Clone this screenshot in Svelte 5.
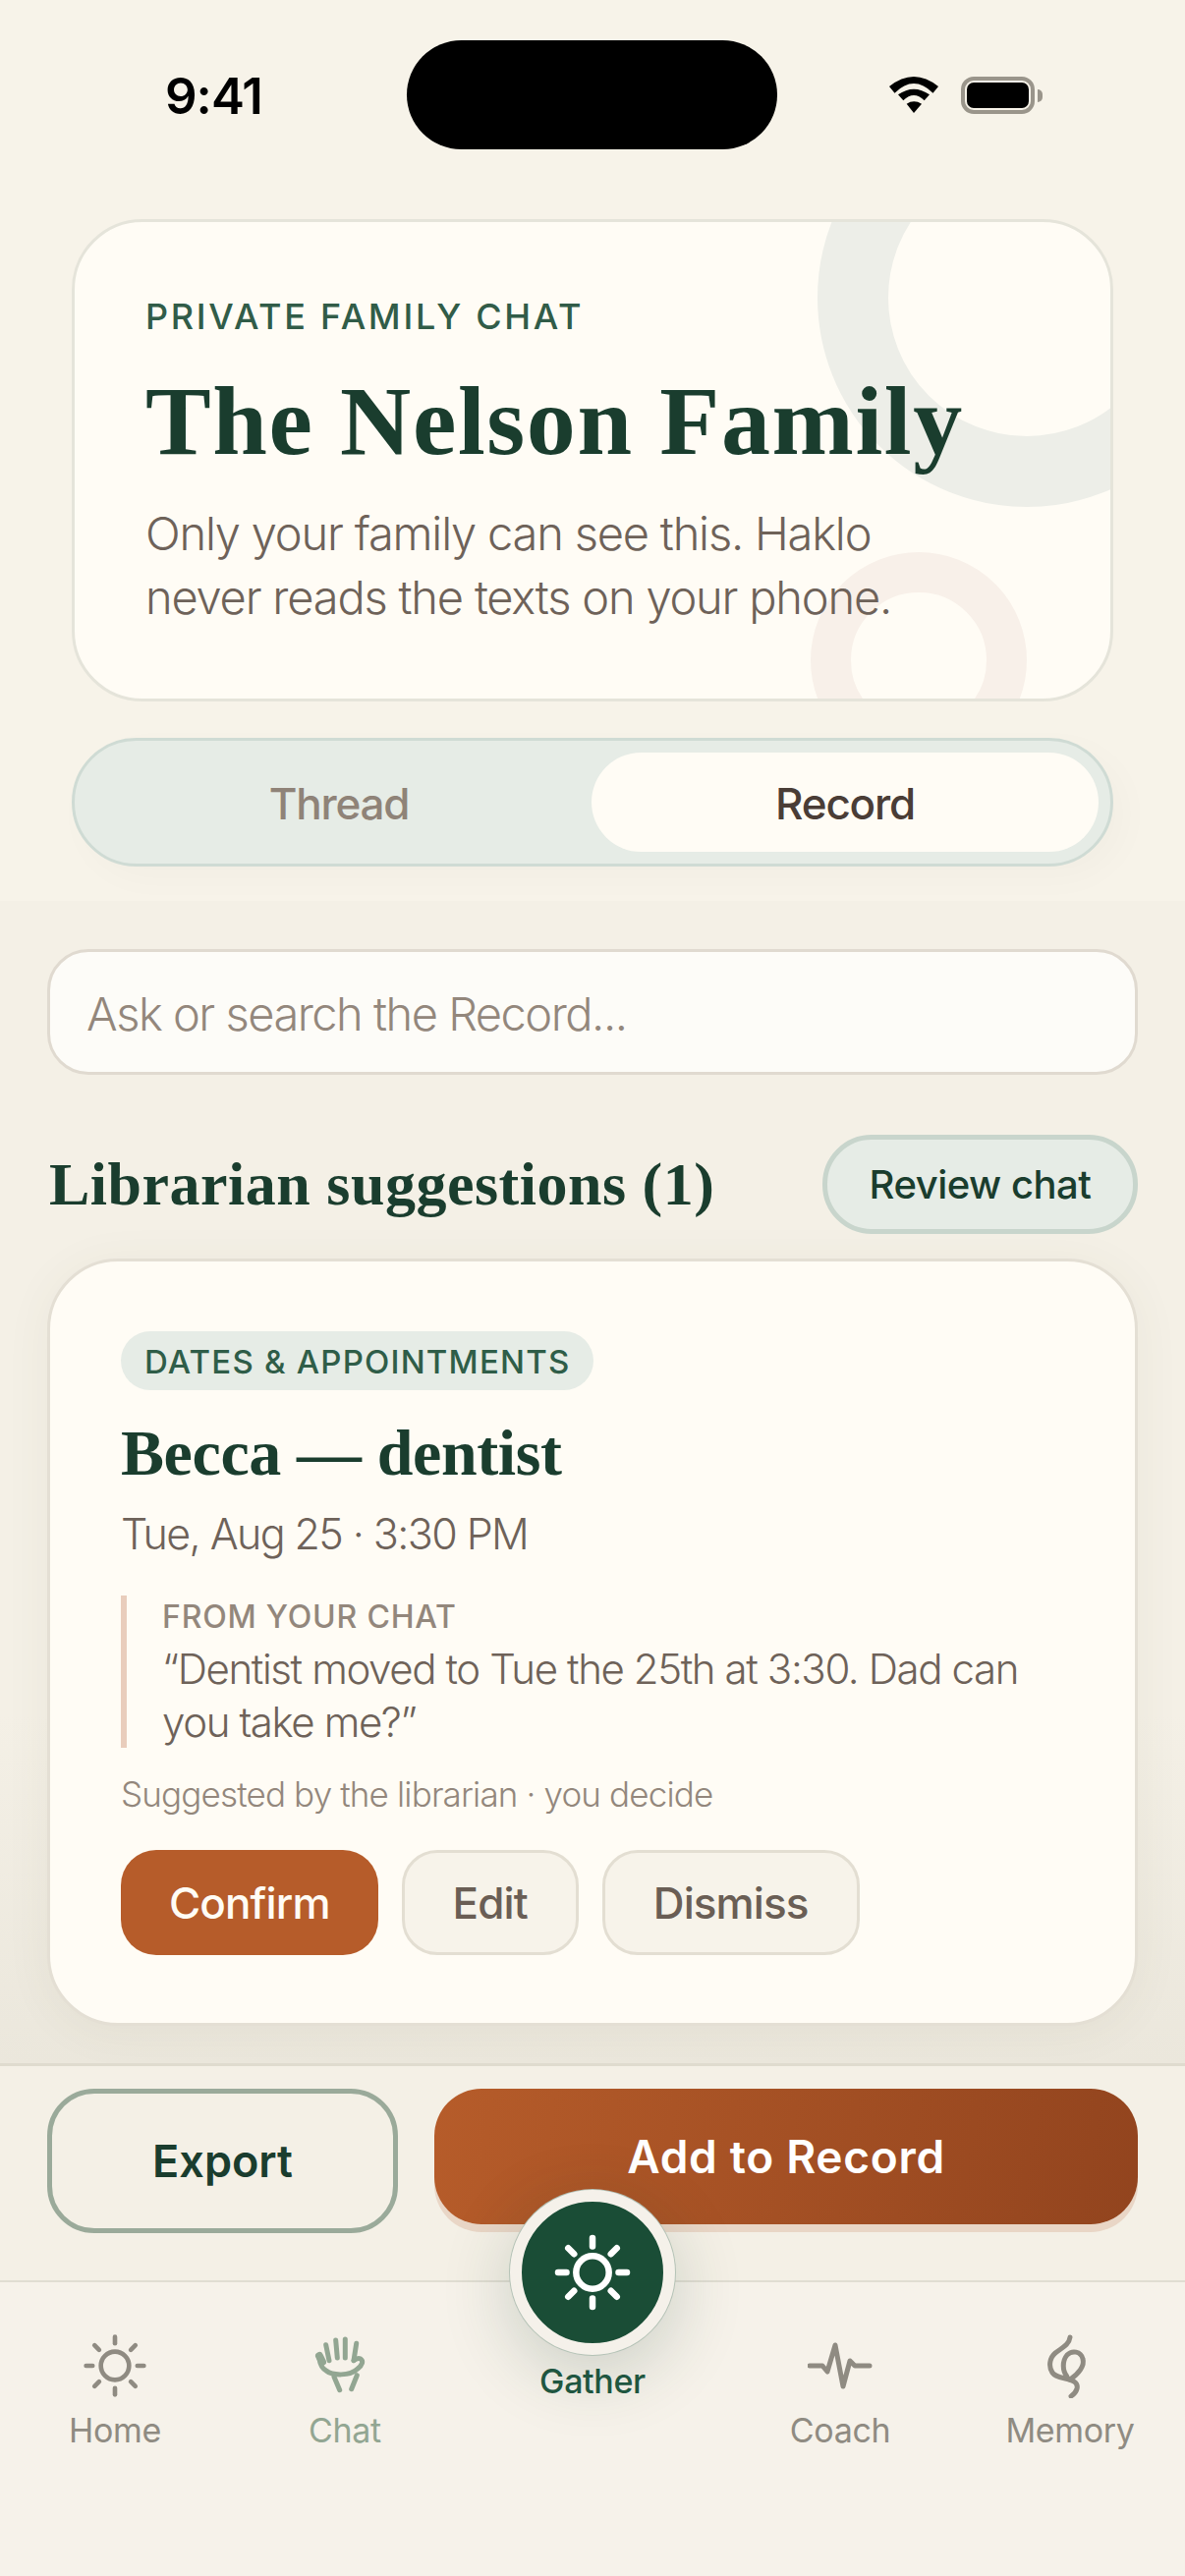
<script lang="ts">
	const tabs = [
		{ label: 'Thread', active: false },
		{ label: 'Record', active: true }
	];
	const rays = [0, 45, 90, 135, 180, 225, 270, 315];
</script>

{#snippet sun(inner: number, from: number, to: number, width: number)}
	<circle cx="50" cy="50" r={inner} fill="none" stroke="currentColor" stroke-width={width} />
	{#each rays as angle}
		<line
			x1="50"
			y1={50 - from}
			x2="50"
			y2={50 - to}
			stroke="currentColor"
			stroke-width={width}
			stroke-linecap="round"
			transform="rotate({angle} 50 50)"
		/>
	{/each}
{/snippet}

<div class="phone">
	<header class="top">
		<div class="status">
			<span class="time">9:41</span>
			<div class="island"></div>
			<div class="status-icons">
				<svg class="wifi" viewBox="0 0 50 38" width="50" height="38">
					<path d="M0 10 Q25 -10 50 10 L44.5 16.7 Q25 -2.7 5.5 16.7 Z" fill="#000" />
					<path d="M9 18.3 Q25 7 41 18.3 L35.7 24.3 Q25 13.7 14.3 24.3 Z" fill="#000" />
					<path d="M17.7 27.7 Q25 23 33 27.7 L25 37 Z" fill="#000" />
				</svg>
				<div class="battery"><div class="battery-fill"></div></div>
				<div class="battery-nub"></div>
			</div>
		</div>

		<section class="hero">
			<div class="ring ring-green"></div>
			<div class="ring ring-clay"></div>
			<div class="eyebrow">PRIVATE FAMILY CHAT</div>
			<h1>The Nelson Family</h1>
			<p>Only your family can see this. Haklo<br />never reads the texts on your phone.</p>
		</section>

		<div class="tabs">
			{#each tabs as tab}
				<div class="tab" class:active={tab.active}>{tab.label}</div>
			{/each}
		</div>
	</header>

	<main class="record">
		<div class="search">Ask or search the Record...</div>

		<div class="section-head">
			<h2>Librarian suggestions (1)</h2>
			<div class="review">Review chat</div>
		</div>

		<article class="card">
			<span class="tag">DATES &amp; APPOINTMENTS</span>
			<h3>Becca — dentist</h3>
			<div class="when">Tue, Aug 25 · 3:30 PM</div>
			<blockquote>
				<div class="from">FROM YOUR CHAT</div>
				<div class="quote">“Dentist moved to Tue the 25th at 3:30. Dad can you take me?”</div>
			</blockquote>
			<div class="note">Suggested by the librarian · you decide</div>
			<div class="actions">
				<div class="btn primary">Confirm</div>
				<div class="btn">Edit</div>
				<div class="btn">Dismiss</div>
			</div>
		</article>
	</main>

	<div class="action-bar">
		<div class="export">Export</div>
		<div class="add">Add to Record</div>
	</div>

	<nav class="nav">
		<div class="nav-item">
			<svg viewBox="0 0 100 100" width="66" height="66">{@render sun(21.7, 34.5, 44.5, 7)}</svg>
			<span>Home</span>
		</div>
		<div class="nav-item chat">
			<svg viewBox="0 0 66 66" width="66" height="66" fill="none" stroke="currentColor" stroke-width="5" stroke-linecap="round" stroke-linejoin="round">
				<path d="M13.7 11.7 L17 27.7" />
				<path d="M23.7 7 L25.3 25" />
				<path d="M33.3 6 L33.3 25" />
				<path d="M44.7 10.3 L42 27.7" />
				<path d="M7 26 C8 33 10 36 14 38 C20 43 38 44 46 36 C51 32 52 28 49 26 C47 25 44 26 42 27.7" />
				<path d="M7 23 L10 29" stroke-width="8" />
				<path d="M22 44.3 L27.7 57.7" />
				<path d="M45.3 42.7 L39.7 56.7" />
			</svg>
			<span>Chat</span>
		</div>
		<div class="nav-item gather">
			<div class="gather-btn">
				<svg viewBox="0 0 100 100" width="100" height="100">{@render sun(16.7, 26.5, 35, 6.5)}</svg>
			</div>
			<span>Gather</span>
		</div>
		<div class="nav-item">
			<svg viewBox="0 0 66 66" width="66" height="66" fill="none" stroke="currentColor" stroke-width="5" stroke-linecap="round" stroke-linejoin="round">
				<path d="M2 33 L15 33 L20 39 L28 12 L36 54 L43 28 L48 33 L63 33" />
			</svg>
			<span>Coach</span>
		</div>
		<div class="nav-item">
			<svg viewBox="0 0 66 66" width="66" height="66" fill="none" stroke="currentColor" stroke-width="5" stroke-linecap="round" stroke-linejoin="round">
				<path d="M33 4 C32 12 24 15 18 20 C12 25 11 34 15 40 C19 46 30 45 37 49 C43 53 40 60 34 64" />
				<path d="M30 44 C25 38 25 28 30 22 C35 17 44 18 46 26 C48 33 42 41 33 47" />
			</svg>
			<span>Memory</span>
		</div>
	</nav>
</div>

<style>
	:global(body) {
		margin: 0;
		background: #f7f3e9;
	}

	.phone {
		width: 1206px;
		height: 2622px;
		display: flex;
		flex-direction: column;
		overflow: hidden;
		font-family: Inter, 'Liberation Sans', sans-serif;
		color: #6e6259;
	}

	/* header */
	.top {
		height: 917px;
		box-sizing: border-box;
		flex-shrink: 0;
		background: #f7f3e9;
	}

	.status {
		height: 223px;
		box-sizing: border-box;
		padding-top: 41px;
		display: flex;
		align-items: flex-start;
		position: relative;
	}

	.time {
		margin: 32px 0 0 168px;
		font-size: 51px;
		line-height: 50px;
		font-weight: 600;
		letter-spacing: -1px;
		color: #000;
	}

	.island {
		position: absolute;
		left: 414px;
		top: 41px;
		width: 377px;
		height: 111px;
		border-radius: 56px;
		background: #000;
	}

	.status-icons {
		position: absolute;
		left: 905px;
		top: 78px;
		display: flex;
		align-items: center;
	}

	.wifi {
		display: block;
	}

	.battery {
		margin-left: 23px;
		width: 75px;
		height: 38px;
		box-sizing: border-box;
		border: 4px solid #9a958b;
		border-radius: 13px;
		padding: 2px;
	}

	.battery-fill {
		width: 100%;
		height: 100%;
		background: #000;
		border-radius: 7px;
	}

	.battery-nub {
		margin-left: 3px;
		width: 5px;
		height: 13px;
		border-radius: 0 6px 6px 0;
		background: #9a958b;
	}

	.hero {
		margin: 0 73px;
		height: 491px;
		box-sizing: border-box;
		position: relative;
		overflow: hidden;
		padding: 72px;
		background: #fffcf5;
		border: 3px solid #e5e4da;
		border-radius: 72px;
	}

	.ring {
		position: absolute;
		box-sizing: border-box;
		border-radius: 50%;
		border-style: solid;
	}

	.ring-green {
		left: 756px;
		top: -136px;
		width: 426px;
		height: 426px;
		border-width: 72px;
		border-color: #edeee8;
	}

	.ring-clay {
		left: 749px;
		top: 336px;
		width: 220px;
		height: 220px;
		border-width: 41px;
		border-color: #f8f0e9;
	}

	.eyebrow,
	h1,
	.hero p {
		position: relative;
		margin: 0;
	}

	.eyebrow {
		font-size: 36px;
		line-height: 48px;
		font-weight: 500;
		letter-spacing: 2.7px;
		color: #315c48;
	}

	h1 {
		margin-top: 29px;
		font-family: 'Liberation Serif', serif;
		font-size: 100px;
		line-height: 108px;
		font-weight: 700;
		letter-spacing: 1.6px;
		color: #1a3d2e;
	}

	.hero p {
		margin-top: 27px;
		font-size: 47px;
		line-height: 65px;
		font-weight: 300;
		letter-spacing: -1.2px;
	}

	.tabs {
		margin: 37px 73px 0;
		height: 131px;
		box-sizing: border-box;
		padding: 12px;
		display: grid;
		grid-template-columns: 1fr 516px;
		background: #e6ece6;
		border: 3px solid #cfdbd4;
		border-radius: 66px;
		box-shadow: 12px 12px 36px rgba(26, 61, 46, 0.025);
	}

	.tab {
		display: flex;
		align-items: center;
		justify-content: center;
		padding-top: 2px;
		border-radius: 51px;
		font-size: 44px;
		font-weight: 500;
		letter-spacing: -1.2px;
		color: #8f8378;
	}

	.tab.active {
		background: #fffcf5;
		color: #4a3d36;
	}

	/* record */
	.record {
		height: 1183px;
		flex-shrink: 0;
		box-sizing: border-box;
		padding: 49px 48px 0;
		background: linear-gradient(#f4f0e6 70%, #ebe7dc);
	}

	.search {
		height: 128px;
		box-sizing: border-box;
		padding: 2px 0 0 37px;
		display: flex;
		align-items: center;
		background: #fdfcf8;
		border: 3px solid #e0dad0;
		border-radius: 42px;
		font-size: 47px;
		font-weight: 300;
		letter-spacing: -1.5px;
		color: #93877c;
	}

	.section-head {
		margin-top: 61px;
		height: 101px;
		display: flex;
		align-items: center;
		justify-content: space-between;
	}

	h2 {
		margin: 0 0 0 2px;
		font-family: 'Liberation Serif', serif;
		font-size: 62px;
		font-weight: 700;
		letter-spacing: 0.5px;
		color: #1a3d2e;
	}

	.review {
		width: 321px;
		height: 101px;
		box-sizing: border-box;
		display: flex;
		align-items: center;
		justify-content: center;
		background: #e6ece6;
		border: 5px solid #c8d5cc;
		border-radius: 50px;
		font-size: 40px;
		font-weight: 500;
		letter-spacing: -0.5px;
		color: #1a3d2e;
	}

	.card {
		margin-top: 25px;
		height: 781px;
		box-sizing: border-box;
		padding: 71px 72px;
		background: #fffcf5;
		border: 3px solid #e4dfd4;
		border-radius: 72px;
		box-shadow: 0 6px 48px rgba(90, 80, 50, 0.06);
	}

	.tag {
		display: inline-block;
		height: 60px;
		box-sizing: border-box;
		padding: 1px 24px 0;
		line-height: 60px;
		border-radius: 30px;
		background: #e6ece6;
		font-size: 33px;
		font-weight: 500;
		letter-spacing: 1.2px;
		color: #2f5d48;
	}

	h3 {
		margin: 24px 0 0;
		font-family: 'Liberation Serif', serif;
		font-size: 66px;
		line-height: 80px;
		font-weight: 700;
		letter-spacing: -0.4px;
		color: #1a3d2e;
	}

	.when {
		margin-top: 12px;
		font-size: 43px;
		line-height: 60px;
		font-weight: 300;
		letter-spacing: -1.6px;
	}

	blockquote {
		margin: 33px 0 0;
		padding: 0 0 0 36px;
		height: 155px;
		border-left: 6px solid #e9cdbc;
	}

	.from {
		padding-top: 1px;
		font-size: 32px;
		line-height: 42px;
		font-weight: 500;
		letter-spacing: 0.8px;
		color: #93877c;
	}

	.quote {
		margin-top: 5px;
		font-size: 42px;
		line-height: 54px;
		font-weight: 300;
		letter-spacing: -1.4px;
	}

	.note {
		margin-top: 23px;
		font-size: 35px;
		line-height: 48px;
		font-weight: 300;
		letter-spacing: -0.85px;
		color: #93877c;
	}

	.actions {
		margin-top: 33px;
		display: flex;
		gap: 24px;
	}

	.btn {
		height: 107px;
		box-sizing: border-box;
		padding: 0 49px;
		display: flex;
		align-items: center;
		background: #f7f3ea;
		border: 3px solid #e3ded2;
		border-radius: 36px;
		font-size: 44px;
		font-weight: 500;
		letter-spacing: -0.9px;
		color: #6a5e55;
	}

	.btn.primary {
		background: #b65c2a;
		border: 0;
		color: #fffcf5;
	}

	/* bottom */
	.action-bar {
		height: 221px;
		flex-shrink: 0;
		box-sizing: border-box;
		padding: 23px 48px 0;
		display: flex;
		gap: 37px;
		align-items: flex-start;
		background: #f4f0e6;
		border-top: 3px solid #dfdbce;
	}

	.export {
		width: 357px;
		height: 147px;
		box-sizing: border-box;
		display: flex;
		align-items: center;
		justify-content: center;
		border: 5px solid #9aaa9a;
		border-radius: 48px;
		font-size: 45px;
		font-weight: 600;
		color: #1a3d2e;
	}

	.add {
		flex: 1;
		height: 138px;
		display: flex;
		align-items: center;
		justify-content: center;
		border-radius: 48px;
		background: linear-gradient(100deg, #b65c2a, #92441e);
		box-shadow: 0 8px 0 #e9d6c6;
		font-size: 46px;
		font-weight: 600;
		letter-spacing: 0.7px;
		color: #fff;
	}

	.nav {
		flex: 1;
		display: grid;
		grid-template-columns: 234px 234px 270px 234px 234px;
		align-items: start;
		padding-top: 52px;
		background: #f6f2ea;
		border-top: 2px solid #e0ddd2;
	}

	.nav-item {
		display: flex;
		flex-direction: column;
		align-items: center;
		gap: 11px;
		font-size: 34px;
		line-height: 44px;
		letter-spacing: -0.35px;
		color: #8f8b82;
	}

	.nav-item svg {
		display: block;
	}

	.nav-item.chat {
		color: #92a692;
	}

	.gather {
		margin-top: -146px;
		gap: 5px;
		color: #1f5640;
		font-weight: 500;
		position: relative;
	}

	.gather-btn {
		width: 144px;
		height: 144px;
		border: 12px solid #f5f1ea;
		border-radius: 50%;
		display: flex;
		align-items: center;
		justify-content: center;
		color: #fff;
		background: #1a4d36;
		box-shadow: 0 0 0 1px #b4c2b6, 0 18px 72px rgba(26, 61, 46, 0.2);
	}
</style>
